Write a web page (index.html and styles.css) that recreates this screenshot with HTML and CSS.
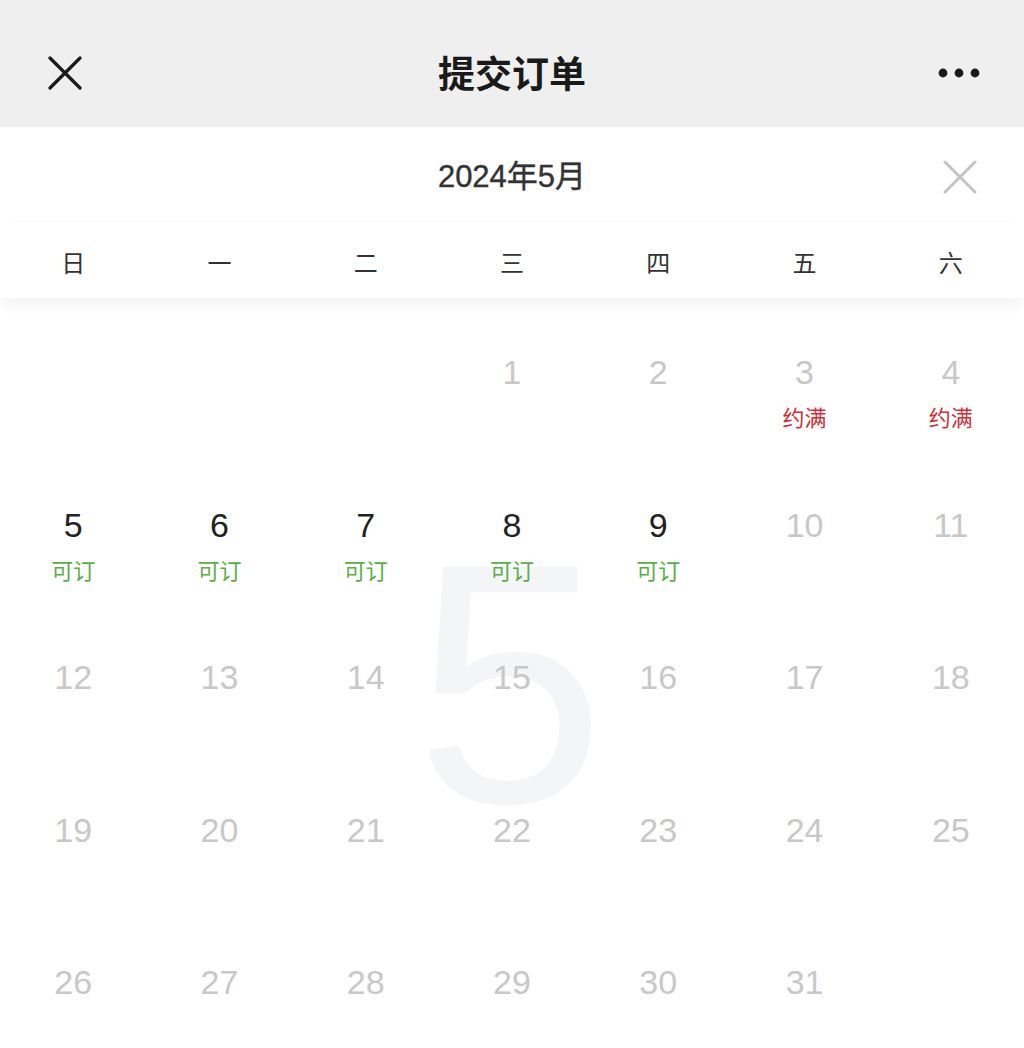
FILE: index.html
```html
<!DOCTYPE html>
<html lang="zh">
<head>
<meta charset="utf-8">
<link rel="stylesheet" href="styles.css">
</head>
<body>
<header class="nav">
  <svg class="nav-close" viewBox="0 0 34 34" width="34" height="34"><path d="M2 2 L32 32 M32 2 L2 32" stroke="#1a1a1a" stroke-width="3.2" fill="none" stroke-linecap="round"/></svg>
  <h1 class="nav-title">提交订单</h1>
  <svg class="nav-more" viewBox="0 0 42 10" width="42" height="10"><circle cx="5" cy="5" r="4.4" fill="#1a1a1a"/><circle cx="21" cy="5" r="4.4" fill="#1a1a1a"/><circle cx="37" cy="5" r="4.4" fill="#1a1a1a"/></svg>
</header>
<section class="panel">
  <div class="month-head">
    <span class="month-title">2024年5月</span>
    <svg class="panel-close" viewBox="0 0 34 34" width="34" height="34"><path d="M2 2 L32 32 M32 2 L2 32" stroke="#c4c4c4" stroke-width="3" fill="none" stroke-linecap="round"/></svg>
  </div>
  <div class="weekdays">
    <span>日</span><span>一</span><span>二</span><span>三</span><span>四</span><span>五</span><span>六</span>
  </div>
  <div class="grid-wrap">
    <div class="watermark" aria-hidden="true">5</div>
    <div class="grid">
      <div class="cell"></div><div class="cell"></div><div class="cell"></div>
      <div class="cell"><span class="num">1</span></div>
      <div class="cell"><span class="num">2</span></div>
      <div class="cell"><span class="num">3</span><span class="tag full">约满</span></div>
      <div class="cell"><span class="num">4</span><span class="tag full">约满</span></div>
      <div class="cell"><span class="num on">5</span><span class="tag ok">可订</span></div>
      <div class="cell"><span class="num on">6</span><span class="tag ok">可订</span></div>
      <div class="cell"><span class="num on">7</span><span class="tag ok">可订</span></div>
      <div class="cell"><span class="num on">8</span><span class="tag ok">可订</span></div>
      <div class="cell"><span class="num on">9</span><span class="tag ok">可订</span></div>
      <div class="cell"><span class="num">10</span></div>
      <div class="cell"><span class="num">11</span></div>
      <div class="cell"><span class="num">12</span></div>
      <div class="cell"><span class="num">13</span></div>
      <div class="cell"><span class="num">14</span></div>
      <div class="cell"><span class="num">15</span></div>
      <div class="cell"><span class="num">16</span></div>
      <div class="cell"><span class="num">17</span></div>
      <div class="cell"><span class="num">18</span></div>
      <div class="cell"><span class="num">19</span></div>
      <div class="cell"><span class="num">20</span></div>
      <div class="cell"><span class="num">21</span></div>
      <div class="cell"><span class="num">22</span></div>
      <div class="cell"><span class="num">23</span></div>
      <div class="cell"><span class="num">24</span></div>
      <div class="cell"><span class="num">25</span></div>
      <div class="cell"><span class="num">26</span></div>
      <div class="cell"><span class="num">27</span></div>
      <div class="cell"><span class="num">28</span></div>
      <div class="cell"><span class="num">29</span></div>
      <div class="cell"><span class="num">30</span></div>
      <div class="cell"><span class="num">31</span></div>
      <div class="cell"></div>
    </div>
  </div>
</section>
</body>
</html>
```

FILE: styles.css
```css
* { box-sizing: border-box; }
html, body {
  margin: 0;
  padding: 0;
  width: 1024px;
  height: 1048px;
  overflow: hidden;
  background: #fff;
  font-family: "Liberation Sans", "Noto Sans CJK SC", sans-serif;
}
.nav {
  height: 127px;
  background: #efefef;
  display: flex;
  align-items: center;
  justify-content: space-between;
  padding: 18px 44px 0 48px;
  position: relative;
}
.nav-title {
  position: absolute;
  left: 0;
  right: 0;
  top: 0;
  bottom: 0;
  margin: 0;
  display: flex;
  align-items: center;
  justify-content: center;
  font-size: 37px;
  font-weight: 700;
  color: #1a1a1a;
  padding-top: 16px;
}
.nav-close { display: block; }
.nav-more { display: block; }
.panel {
  background: #fff;
}
.month-head {
  height: 96px;
  display: flex;
  align-items: center;
  justify-content: center;
  position: relative;
}
.month-title {
  font-size: 31px;
  color: #333;
  padding-bottom: 4px;
  -webkit-text-stroke: 0.4px #333;
}
.panel-close {
  position: absolute;
  right: 47px;
  top: 33px;
}
.weekdays {
  height: 75px;
  display: grid;
  grid-template-columns: repeat(7, 1fr);
  align-items: center;
  box-shadow: 0 6px 14px rgba(0, 0, 0, 0.05);
  position: relative;
  z-index: 2;
  padding-top: 2px;
}
.weekdays span {
  text-align: center;
  font-size: 24px;
  color: #333;
}
.grid-wrap {
  position: relative;
  padding-top: 18px;
}
.watermark {
  position: absolute;
  left: 0;
  right: 0;
  top: 214px;
  text-align: center;
  font-size: 342px;
  line-height: 1;
  color: #f4f5f7;
  padding-right: 4px;
  z-index: 0;
}
.grid {
  position: relative;
  z-index: 1;
  display: grid;
  grid-template-columns: repeat(7, 1fr);
  grid-auto-rows: 152.5px;
}
.cell {
  display: flex;
  flex-direction: column;
  align-items: center;
  padding-top: 37px;
}
.num {
  font-size: 34px;
  line-height: 38px;
  color: #c8c8c8;
}
.num.on { color: #222; }
.tag {
  font-size: 22px;
  line-height: 26px;
  margin-top: 15px;
}
.tag.ok { color: #5aae46; }
.tag.full { color: #cf3037; }
```
